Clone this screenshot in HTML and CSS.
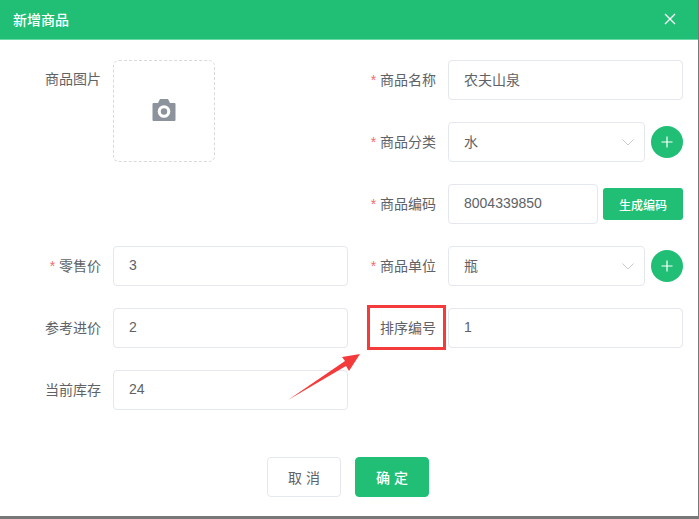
FILE: index.html
```html
<!DOCTYPE html>
<html lang="zh">
<head>
<meta charset="utf-8">
<title>新增商品</title>
<link rel="stylesheet" href="styles.css">
</head>
<body>
<div class="dialog">
  <header class="head">
    <span class="title">新增商品</span>
    <svg class="close" width="12" height="12" viewBox="0 0 12 12"><path d="M1 1l10 10M11 1L1 11" stroke="#fff" stroke-width="1.3" fill="none"/></svg>
  </header>
  <div class="form">
    <div class="col col-left">
      <div class="row row-upload">
        <label class="label">商品图片</label>
        <div class="upload">
          <svg width="24" height="22" viewBox="0 0 24 22"><path fill="#8c939d" d="M8 0h8l2 4h4.500a1 1 0 0 1 1 1v16a1 1 0 0 1-1 1H1.500a1 1 0 0 1-1-1V5a1 1 0 0 1 1-1H6z"/><circle cx="12" cy="12.500" r="6.300" fill="#fff"/><circle cx="12" cy="12.500" r="3.200" fill="#8c939d"/></svg>
        </div>
      </div>
      <div class="row"><label class="label"><i>*</i> 零售价</label><div class="input grow">3</div></div>
      <div class="row"><label class="label">参考进价</label><div class="input grow">2</div></div>
      <div class="row"><label class="label">当前库存</label><div class="input grow">24</div></div>
    </div>
    <div class="col col-right">
      <div class="row"><label class="label"><i>*</i> 商品名称</label><div class="input grow">农夫山泉</div></div>
      <div class="row">
        <label class="label"><i>*</i> 商品分类</label>
        <div class="input grow select">水<svg class="chev" width="12" height="7" viewBox="0 0 12 7"><path d="M.5.500L6 6 11.500.500" stroke="#c8cbd2" stroke-width="1" fill="none"/></svg></div>
        <button class="add"><svg width="12" height="12" viewBox="0 0 12 12"><path d="M6 .5v11M.5 6h11" stroke="#fff" stroke-width="1.200"/></svg></button>
      </div>
      <div class="row">
        <label class="label"><i>*</i> 商品编码</label>
        <div class="input grow">8004339850</div>
        <button class="gen">生成编码</button>
      </div>
      <div class="row">
        <label class="label"><i>*</i> 商品单位</label>
        <div class="input grow select">瓶<svg class="chev" width="12" height="7" viewBox="0 0 12 7"><path d="M.5.500L6 6 11.500.500" stroke="#c8cbd2" stroke-width="1" fill="none"/></svg></div>
        <button class="add"><svg width="12" height="12" viewBox="0 0 12 12"><path d="M6 .5v11M.5 6h11" stroke="#fff" stroke-width="1.200"/></svg></button>
      </div>
      <div class="row"><label class="label">排序编号</label><div class="input grow">1</div></div>
    </div>
  </div>
  <footer class="foot">
    <button class="btn">取 消</button>
    <button class="btn primary">确 定</button>
  </footer>
  <div class="mark"></div>
  <svg class="arrow" width="80" height="54" viewBox="285 350 80 54"><polygon fill="#f43b3b" points="288,400 345,361 342,357 360,354 349,371 346,366"/></svg>
</div>
</body>
</html>
```
FILE: styles.css
```css
* { box-sizing: border-box; }
html, body { margin: 0; height: 100%; }
body {
  background: #787878;
  font-family: "Liberation Sans", "Noto Sans CJK SC", sans-serif;
  font-size: 14px;
  overflow: hidden;
}
.dialog {
  position: relative;
  width: 698px;
  height: 516px;
  background: #fff;
}
.head {
  display: flex;
  align-items: center;
  justify-content: space-between;
  height: 40px;
  padding: 0 22px 1px 13px;
  background: #20bf75;
  border-bottom: 1px solid #6ed8a6;
  color: #fff;
}
.title { font-weight: 500; font-size: 14px; padding-bottom: 1px; }
.close { display: block; }
.form { display: flex; padding-top: 20px; }
.col { display: flex; flex-direction: column; gap: 22px; }
.col-left { width: 348px; }
.col-right { width: 335px; }
.row { display: flex; align-items: center; height: 40px; }
.row-upload { align-items: flex-start; height: 164px; }
.col-left .label { width: 101px; }
.col-right .label { width: 88px; }
.label {
  flex: none;
  text-align: right;
  color: #606266;
  line-height: 38px;
  white-space: nowrap;
}
.label i { color: #f56c6c; font-style: normal; }
.upload {
  display: flex;
  align-items: center;
  justify-content: center;
  width: 102px;
  height: 102px;
  margin-left: 12px;
  border: 1px dashed #d9d9d9;
  border-radius: 6px;
}
.upload svg { margin-top: -3px; }
.input {
  display: flex;
  align-items: center;
  height: 40px;
  margin-left: 12px;
  padding: 0 15px 3px;
  border: 1px solid #e4e7ed;
  border-radius: 4px;
  color: #606266;
}
.grow { flex: 1; min-width: 0; }
.select { justify-content: space-between; padding-right: 10px; }
.chev { display: block; margin-top: 3px; }
.add {
  flex: none;
  display: flex;
  align-items: center;
  justify-content: center;
  width: 32px;
  height: 32px;
  margin-left: 6px;
  padding: 0;
  border: 0;
  border-radius: 50%;
  background: #20bf75;
}
.gen {
  flex: none;
  width: 80px;
  height: 32px;
  margin-left: 5px;
  padding: 0;
  border: 0;
  border-radius: 3px;
  background: #20bf75;
  color: #fff;
  font: 500 12px "Liberation Sans", "Noto Sans CJK SC", sans-serif;
}
.foot {
  display: flex;
  justify-content: center;
  gap: 14px;
  margin-top: 47px;
  padding-right: 2px;
}
.btn {
  width: 74px;
  height: 40px;
  padding: 0;
  border: 1px solid #e4e7ed;
  border-radius: 4px;
  background: #fff;
  color: #606266;
  font: 400 14px "Liberation Sans", "Noto Sans CJK SC", sans-serif;
}
.btn.primary {
  border-color: #20bf75;
  background: #20bf75;
  color: #fff;
  font-weight: 500;
}
.mark {
  position: absolute;
  left: 367px;
  top: 305px;
  width: 79px;
  height: 45px;
  border: 3px solid #f43b3b;
}
.arrow {
  position: absolute;
  left: 285px;
  top: 350px;
}
```
